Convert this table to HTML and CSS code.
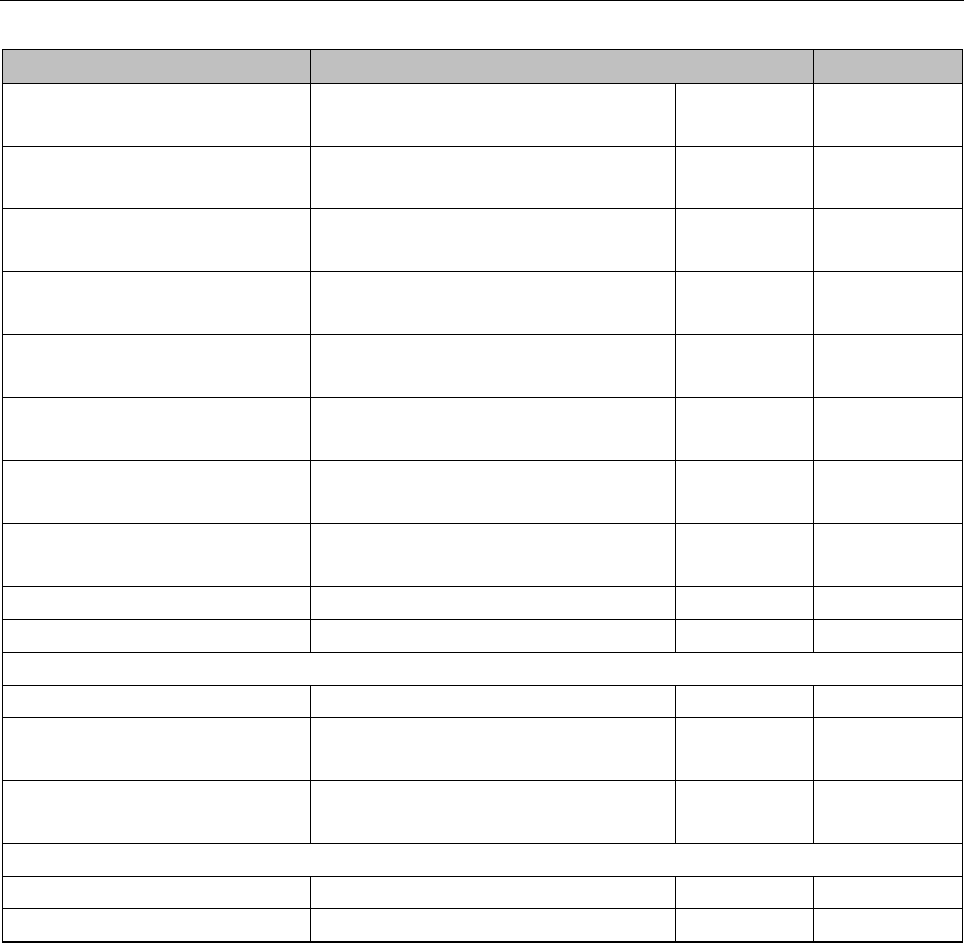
FILE: index.html
```html
<!DOCTYPE html>
<html>
<head>
<meta charset="utf-8">
<link rel="stylesheet" href="styles.css">
</head>
<body>
<div class="rule"></div>
<table class="grid">
  <colgroup>
    <col class="c1"><col class="c2"><col class="c3"><col class="c4">
  </colgroup>
  <thead>
    <tr class="h34"><th></th><th colspan="2"></th><th></th></tr>
  </thead>
  <tbody>
    <tr class="h63"><td></td><td></td><td></td><td></td></tr>
    <tr class="h62"><td></td><td></td><td></td><td></td></tr>
    <tr class="h63"><td></td><td></td><td></td><td></td></tr>
    <tr class="h63"><td></td><td></td><td></td><td></td></tr>
    <tr class="h63"><td></td><td></td><td></td><td></td></tr>
    <tr class="h63"><td></td><td></td><td></td><td></td></tr>
    <tr class="h63"><td></td><td></td><td></td><td></td></tr>
    <tr class="h63"><td></td><td></td><td></td><td></td></tr>
    <tr class="h33"><td></td><td></td><td></td><td></td></tr>
    <tr class="h33"><td></td><td></td><td></td><td></td></tr>
    <tr class="h33"><td colspan="4"></td></tr>
    <tr class="h32"><td></td><td></td><td></td><td></td></tr>
    <tr class="h63"><td></td><td></td><td></td><td></td></tr>
    <tr class="h63"><td></td><td></td><td></td><td></td></tr>
    <tr class="h33"><td colspan="4"></td></tr>
    <tr class="h32"><td></td><td></td><td></td><td></td></tr>
    <tr class="h33 last"><td></td><td></td><td></td><td></td></tr>
  </tbody>
</table>
</body>
</html>
```
FILE: styles.css
```css
html, body {
  margin: 0;
  padding: 0;
  background: #ffffff;
  font-family: "Liberation Serif", serif;
}
.rule {
  height: 1px;
  background: #000000;
}
.grid {
  margin: 48px 0 0 2px;
  width: 960px;
  border-collapse: collapse;
  table-layout: fixed;
}
.c1 { width: 308px; }
.c2 { width: 365px; }
.c3 { width: 138px; }
.c4 { width: 149px; }
.grid th, .grid td {
  border: 1px solid #000000;
  padding: 0;
}
.grid th {
  background: #c0c0c0;
}
.h34 { height: 34px; }
.h63 { height: 63px; }
.h62 { height: 62px; }
.h33 { height: 33px; }
.h32 { height: 32px; }
.last td { border-bottom: 2px solid #000000; }
```
